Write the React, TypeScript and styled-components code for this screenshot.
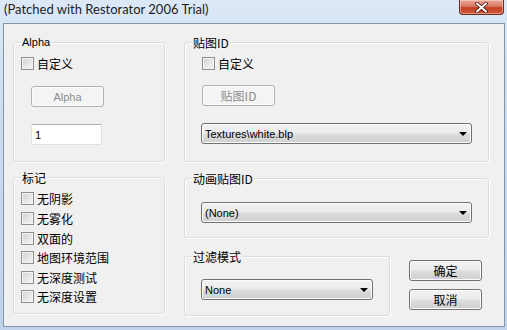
import React from "react";
import styled, { createGlobalStyle } from "styled-components";

const Global = createGlobalStyle`
  html, body { margin: 0; padding: 0; }
  body { width: 507px; height: 330px; overflow: hidden; background: #c9d9ec; }
  * { box-sizing: border-box; }
`;

const CJK = `"Noto Sans CJK SC", "Liberation Sans", sans-serif`;
const UI = `"Liberation Sans", "Noto Sans CJK SC", sans-serif`;

const Window = styled.div`
  width: 507px;
  height: 330px;
  display: flex;
  flex-direction: column;
  background: linear-gradient(180deg, #dce8f6 0%, #c9dbef 40%, #bfd3ea 100%);
`;

const TitleBar = styled.div`
  height: 23px;
  display: flex;
  align-items: flex-start;
  justify-content: space-between;
  padding-left: 4px;
  padding-right: 3px;
`;

const Title = styled.div`
  font-family: "Lato", "Liberation Sans", sans-serif;
  font-size: 13px;
  line-height: 14px;
  color: #1e1e1e;
  padding-top: 2px;
`;

const CloseButton = styled.div`
  width: 45px;
  height: 15px;
  border: 1px solid #6b2a20;
  border-top: none;
  border-radius: 0 0 4px 4px;
  background: linear-gradient(180deg, #e9a99a 0%, #d87863 45%, #c2401f 55%, #d0593a 100%);
  box-shadow: inset 0 0 0 1px rgba(255, 220, 210, 0.5);
  display: flex;
  align-items: center;
  justify-content: center;
`;

const Client = styled.div`
  flex: 1;
  margin: 0 2px 3px 3px;
  border: 1px solid #8595a8;
  background: #f0f0f0;
  padding: 18px 0 0 9px;
  display: grid;
  grid-template-columns: 152px 305px;
  column-gap: 19px;
  align-items: start;
`;

const Column = styled.div`
  display: flex;
  flex-direction: column;
`;

const Group = styled.div<{ $h: number; $w?: number; $mt?: number; $pt: number; $pl: number }>`
  position: relative;
  height: ${(p) => p.$h}px;
  width: ${(p) => (p.$w ? `${p.$w}px` : "auto")};
  margin-top: ${(p) => p.$mt ?? 0}px;
  border: 1px solid #d5dfe5;
  border-radius: 3px;
  box-shadow: inset 1px 1px 0 #ffffff, 1px 1px 0 #ffffff;
  padding: ${(p) => p.$pt}px 0 0 ${(p) => p.$pl}px;
  display: flex;
  flex-direction: column;
  align-items: flex-start;
`;

const Caption = styled.span<{ $latin?: boolean }>`
  position: absolute;
  top: -7px;
  left: 7px;
  padding: 0 1px;
  background: #f0f0f0;
  font-family: ${(p) => (p.$latin ? UI : CJK)};
  font-size: ${(p) => (p.$latin ? 11 : 12)}px;
  line-height: 13px;
  color: #000;
  white-space: nowrap;
`;

const CheckRow = styled.label<{ $mt?: number }>`
  display: flex;
  align-items: center;
  gap: 3px;
  height: 13px;
  margin-top: ${(p) => p.$mt ?? 0}px;
`;

const CheckBox = styled.span`
  width: 13px;
  height: 13px;
  border: 1px solid #8e8f8f;
  background: linear-gradient(135deg, #d0d0d0 0%, #e8e8e8 60%, #f6f6f6 100%);
  box-shadow: inset 0 0 0 1px #f4f4f4;
  flex: none;
`;

const CheckText = styled.span`
  font-family: ${CJK};
  font-size: 12px;
  line-height: 13px;
  color: #000;
  white-space: nowrap;
`;

const FlagList = styled.div`
  display: grid;
  grid-template-rows: 20px 20px 19px 20px 19px 13px;
`;

const Button = styled.div<{ $disabled?: boolean; $mt?: number; $ml?: number; $cjk?: boolean }>`
  width: 73px;
  height: 21px;
  margin-top: ${(p) => p.$mt ?? 0}px;
  margin-left: ${(p) => p.$ml ?? 0}px;
  border-radius: 3px;
  display: flex;
  align-items: center;
  justify-content: center;
  font-family: ${(p) => (p.$cjk ? CJK : UI)};
  font-size: ${(p) => (p.$cjk ? 12 : 11)}px;
  border: 1px solid ${(p) => (p.$disabled ? "#adb2b5" : "#707070")};
  color: ${(p) => (p.$disabled ? "#8d8d8d" : "#000")};
  background: ${(p) =>
    p.$disabled
      ? "#f4f4f4"
      : "linear-gradient(180deg, #f2f2f2 0%, #ebebeb 48%, #dddddd 52%, #cfcfcf 100%)"};
  box-shadow: inset 0 0 0 1px ${(p) => (p.$disabled ? "#fbfbfb" : "#fcfcfc")};
`;

const Edit = styled.div`
  width: 71px;
  height: 21px;
  margin-top: 17px;
  margin-left: 10px;
  border: 1px solid #dbdfe6;
  border-top-color: #abadb3;
  border-left-color: #e2e3ea;
  border-radius: 2px;
  background: #fff;
  display: flex;
  align-items: center;
  padding-left: 3px;
  font-family: ${UI};
  font-size: 11px;
  color: #000;
`;

const Combo = styled.div<{ $w: number; $mt?: number; $ml?: number }>`
  width: ${(p) => p.$w}px;
  height: 21px;
  margin-top: ${(p) => p.$mt ?? 0}px;
  margin-left: ${(p) => p.$ml ?? 0}px;
  border: 1px solid #707070;
  border-radius: 3px;
  background: linear-gradient(180deg, #f2f2f2 0%, #ebebeb 48%, #dddddd 52%, #cfcfcf 100%);
  box-shadow: inset 0 0 0 1px #fcfcfc;
  display: flex;
  align-items: center;
  justify-content: space-between;
  padding: 0 4px 0 3px;
  font-family: ${UI};
  font-size: 11px;
  color: #000;
`;

const Arrow = styled.span`
  width: 0;
  height: 0;
  border-left: 4px solid transparent;
  border-right: 4px solid transparent;
  border-top: 4px solid #000;
  margin-top: 1px;
`;

const BottomRow = styled.div`
  display: flex;
  margin-top: 18px;
`;

const ButtonColumn = styled.div`
  display: flex;
  flex-direction: column;
  gap: 8px;
  margin-left: 19px;
  padding-top: 4px;
`;

const flags = ["无阴影", "无雾化", "双面的", "地图环境范围", "无深度测试", "无深度设置"];

export default function App() {
  return (
    <>
      <Global />
      <Window>
        <TitleBar>
          <Title>(Patched with Restorator 2006 Trial)</Title>
          <CloseButton>
            <svg width="13" height="11" viewBox="0 0 13 11">
              <path
                d="M2 1.5 L11 9.5 M11 1.5 L2 9.5"
                stroke="#3b1208"
                strokeWidth="3.6"
                strokeLinecap="round"
              />
              <path
                d="M2 1.5 L11 9.5 M11 1.5 L2 9.5"
                stroke="#ffffff"
                strokeWidth="2"
                strokeLinecap="round"
              />
            </svg>
          </CloseButton>
        </TitleBar>
        <Client>
          <Column>
            <Group $h={120} $pt={14} $pl={7}>
              <Caption $latin>Alpha</Caption>
              <CheckRow>
                <CheckBox />
                <CheckText>自定义</CheckText>
              </CheckRow>
              <Button $disabled $mt={16} $ml={10}>
                Alpha
              </Button>
              <Edit>1</Edit>
            </Group>
            <Group $h={137} $mt={15} $pt={14} $pl={7}>
              <Caption>标记</Caption>
              <FlagList>
                {flags.map((f) => (
                  <CheckRow key={f}>
                    <CheckBox />
                    <CheckText>{f}</CheckText>
                  </CheckRow>
                ))}
              </FlagList>
            </Group>
          </Column>
          <Column>
            <Group $h={120} $pt={14} $pl={17}>
              <Caption>贴图ID</Caption>
              <CheckRow>
                <CheckBox />
                <CheckText>自定义</CheckText>
              </CheckRow>
              <Button $disabled $cjk $mt={15}>
                贴图ID
              </Button>
              <Combo $w={271} $mt={17} $ml={-1}>
                <span>Textures\white.blp</span>
                <Arrow />
              </Combo>
            </Group>
            <Group $h={60} $mt={16} $pt={23} $pl={16}>
              <Caption>动画贴图ID</Caption>
              <Combo $w={271}>
                <span>(None)</span>
                <Arrow />
              </Combo>
            </Group>
            <BottomRow>
              <Group $h={60} $w={206} $pt={22} $pl={16}>
                <Caption>过滤模式</Caption>
                <Combo $w={172}>
                  <span>None</span>
                  <Arrow />
                </Combo>
              </Group>
              <ButtonColumn>
                <Button $cjk>确定</Button>
                <Button $cjk>取消</Button>
              </ButtonColumn>
            </BottomRow>
          </Column>
        </Client>
      </Window>
    </>
  );
}
